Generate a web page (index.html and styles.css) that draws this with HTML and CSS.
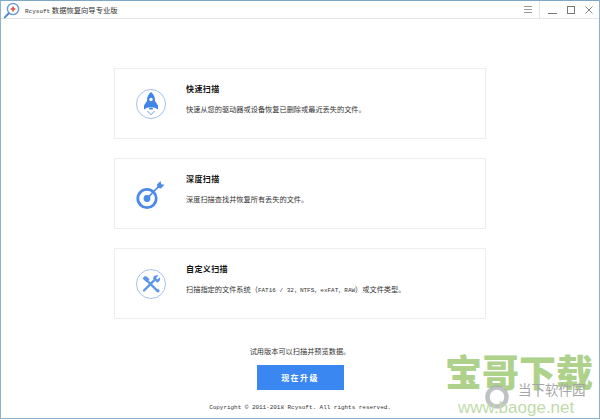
FILE: index.html
```html
<!DOCTYPE html>
<html lang="zh-CN">
<head>
    <meta charset="UTF-8">
    <title>Rcysoft 数据恢复向导专业版</title>
    <link rel="stylesheet" href="styles.css">
</head>
<body>

    <div class="window">
        <!-- Title bar -->
        <div class="titlebar">
            <svg class="app-icon" width="17" height="17" viewBox="0 0 17 17">
                <circle cx="10" cy="7" r="5.6" fill="#fff" stroke="#6d9fd8" stroke-width="1.5"/>
                <path d="M5.8 11.2 1.8 15.4" stroke="#4f8bd0" stroke-width="2" stroke-linecap="round"/>
                <path d="M10 4.6v4.8M7.600 7h4.800" stroke="#e0503f" stroke-width="1.6"/>
            </svg>
            <span class="app-title"><span class="latin">Rcysoft</span> 数据恢复向导专业版</span>
            <div class="controls">
                <svg class="menu-btn" width="8" height="7" viewBox="0 0 8 7">
                    <path d="M0 .5h8M0 3.5h8M0 6.5h8" stroke="#999" stroke-width="1"/>
                </svg>
                <div class="win-btns">
                    <svg width="9" height="9" viewBox="0 0 9 9"><path d="M0 8.5h9" stroke="#777" stroke-width="1"/></svg>
                    <svg width="8" height="8" viewBox="0 0 8 8"><rect x=".5" y=".5" width="7" height="7" fill="none" stroke="#777" stroke-width="1"/></svg>
                    <svg width="8" height="8" viewBox="0 0 8 8"><path d="M.5.5l7 7M7.5.5l-7 7" stroke="#888" stroke-width="1"/></svg>
                </div>
            </div>
        </div>

        <div class="content">
            <div class="card">
                <svg class="card-icon" width="30" height="30" viewBox="0 0 30 30">
                    <circle cx="15" cy="15" r="14.5" fill="none" stroke="#a3c1ee" stroke-width="1"/>
                    <path d="M15 3c2.800 2.200 4 5.200 4 8.200V18.500h-8V11.200c0-3 1.200-6 4-8.200z" fill="#4285e8"/>
                    <path d="M11 12 8 16.500v4l3.500-2zM19 12l3 4.500v4l-3.500-2z" fill="#4285e8"/>
                    <circle cx="15" cy="10.500" r="1.700" fill="#fff"/>
                    <path d="M13 19h4l-.5 1.500h-3z" fill="#4285e8"/>
                    <path d="M11.500 22 15 25.800l3.500-3.800" fill="none" stroke="#6b9fec" stroke-width="1"/>
                </svg>
                <div class="card-text">
                    <h2>快速扫描</h2>
                    <p>快速从您的驱动器或设备恢复已删除或最近丢失的文件。</p>
                </div>
            </div>

            <div class="card">
                <svg class="card-icon" width="30" height="30" viewBox="0 0 30 30">
                    <circle cx="11" cy="19.500" r="9.200" fill="none" stroke="#4c8be8" stroke-width="2.800"/>
                    <circle cx="11" cy="19.500" r="3.400" fill="#4c8be8"/>
                    <path d="M11 19.500 24 6" stroke="#4c8be8" stroke-width="1.800"/>
                    <path d="M21 5.500 24.500 2l.8 3.200 3.200.6-3.600 3.600-3.400-.6z" fill="#4c8be8"/>
                </svg>
                <div class="card-text">
                    <h2>深度扫描</h2>
                    <p>深度扫描查找并恢复所有丢失的文件。</p>
                </div>
            </div>

            <div class="card">
                <svg class="card-icon" width="30" height="30" viewBox="0 0 30 30">
                    <circle cx="15" cy="15" r="14.500" fill="none" stroke="#a3c1ee" stroke-width="1"/>
                    <path d="M8 21.500 19 10.500" stroke="#5c95ea" stroke-width="2.400" stroke-linecap="round"/>
                    <path d="M17 9.500c.4-2.500 3-3.800 5.300-2.800l-2.300 2.300 1.500 1.500 2.300-2.300c1 2.300-.4 5-2.900 5.300z" fill="#5c95ea"/>
                    <path d="M11 11.500 21 21.500" stroke="#5c95ea" stroke-width="2.400"/>
                    <path d="M6.500 9.500 8.800 7l2.200.8 2.500 2.500-3 3-2.400-2.400z" fill="#5c95ea"/>
                    <path d="M19.500 22 22 19.500l1.800 2.600-1.700 1.700z" fill="#5c95ea"/>
                </svg>
                <div class="card-text">
                    <h2>自定义扫描</h2>
                    <p>扫描指定的文件系统（<span class="latin">FAT16 / 32，NTFS，exFAT，RAW</span>）或文件类型。</p>
                </div>
            </div>

            <p class="trial-note">试用版本可以扫描并预览数据。</p>
            <button class="upgrade-btn">现在升级</button>
            <p class="copyright">Copyright © 2011-2018 Rcysoft. All rights reserved.</p>
        </div>
    </div>

    <!-- Site watermark over the corner of the screenshot -->
    <div class="watermark">
        <div class="wm-big">宝哥下载</div>
        <div class="wm-small">当下软件园</div>
        <svg class="wm-logo" width="26" height="26" viewBox="0 0 26 26">
            <circle cx="13" cy="13" r="9.500" fill="none" stroke="#a4a8ab" stroke-width="4.500" opacity=".7"/>
        </svg>
        <div class="wm-url">www.baoge.net</div>
    </div>

</body>
</html>
```

FILE: styles.css
```css
* {
    margin: 0;
    padding: 0;
    box-sizing: border-box;
}

body {
    width: 600px;
    height: 420px;
    background: #fff;
    font-family: "Noto Sans CJK SC", "Liberation Sans", sans-serif;
    color: #333;
    position: relative;
    overflow: hidden;
}

.window {
    width: 600px;
    height: 419px;
    border: 1px solid #8fb2cc;
    border-top-color: #7fa8c6;
    display: flex;
    flex-direction: column;
}

.latin {
    font-family: "Liberation Mono", monospace;
}

/* Title bar */
.titlebar {
    height: 18px;
    flex-shrink: 0;
    border-bottom: 1px solid #e4e4e4;
    display: flex;
    align-items: center;
    padding-left: 2px;
}

.app-icon {
    margin-top: 1px;
}

.app-title {
    margin-left: 5px;
    font-size: 7.3px;
    color: #333;
}

.app-title .latin {
    font-size: 6px;
}

.controls {
    margin-left: auto;
    height: 100%;
    display: flex;
    align-items: center;
}

.menu-btn {
    margin-right: 7px;
}

.win-btns {
    height: 100%;
    border-left: 1px solid #e4e4e4;
    display: flex;
    align-items: center;
    gap: 10px;
    padding-left: 8px;
    padding-right: 6px;
}

/* Main column */
.content {
    flex: 1;
    display: flex;
    flex-direction: column;
    align-items: center;
    padding-top: 49px;
}

.card {
    width: 372px;
    height: 71px;
    border: 1px solid #eeeeee;
    margin-bottom: 19px;
    display: flex;
    align-items: center;
    padding-left: 21px;
}

.card-icon {
    flex-shrink: 0;
    overflow: visible;
}

.card-text {
    align-self: flex-start;
    margin-left: 20px;
    padding-top: 14px;
}

.card-text h2 {
    font-size: 8px;
    line-height: 12px;
    font-weight: 700;
    color: #111;
    letter-spacing: 0.4px;
}

.card-text p {
    margin-top: 8px;
    font-size: 7.2px;
    line-height: 12px;
    color: #333;
}

.card-text .latin {
    font-size: 6px;
}

.trial-note {
    margin-top: 7px;
    font-size: 7.2px;
    line-height: 12px;
    color: #333;
}

.upgrade-btn {
    margin-top: 8px;
    width: 87px;
    height: 25px;
    border: none;
    background: #3b87f2;
    color: #fff;
    font-family: "Noto Sans CJK SC", sans-serif;
    font-size: 8px;
    font-weight: 700;
    letter-spacing: 1.4px;
}

.copyright {
    margin-top: 13px;
    font-family: "Liberation Mono", monospace;
    font-size: 5.95px;
    line-height: 10px;
    color: #333;
}

/* Watermark */
.watermark {
    position: absolute;
    left: 445px;
    top: 350px;
    width: 150px;
    height: 66px;
}

.wm-big {
    position: absolute;
    left: 0;
    top: -4px;
    font-size: 37px;
    line-height: 50px;
    font-weight: 900;
    color: #aed28c;
    white-space: nowrap;
}

.wm-small {
    position: absolute;
    left: 73px;
    top: 30px;
    font-size: 13.500px;
    line-height: 18px;
    color: #a6a6a6;
    white-space: nowrap;
}

.wm-logo {
    position: absolute;
    left: 39px;
    top: 34px;
}

.wm-url {
    position: absolute;
    left: 13px;
    top: 49px;
    font-family: "Liberation Sans", sans-serif;
    font-size: 17px;
    line-height: 18px;
    color: #c1dbaa;
    white-space: nowrap;
}
```
